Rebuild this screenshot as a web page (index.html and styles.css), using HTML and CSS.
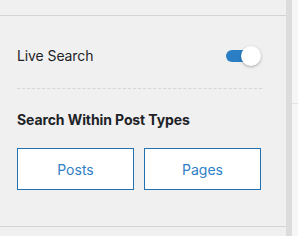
FILE: index.html
```html
<!DOCTYPE html>
<html>
<head>
<meta charset="utf-8">
<link rel="stylesheet" href="styles.css">
</head>
<body>
<div class="wrap">
  <div class="panel">
    <div class="section">
      <div class="row">
        <span class="label">Live Search</span>
        <span class="toggle"><span class="knob"></span></span>
      </div>
      <h3 class="heading">Search Within Post Types</h3>
      <div class="buttons">
        <button class="btn">Posts</button>
        <button class="btn">Pages</button>
      </div>
    </div>
  </div>
  <div class="strip"></div>
  <div class="rest"><div class="rest-line"></div></div>
</div>
</body>
</html>
```

FILE: styles.css
```css
html, body {
  margin: 0;
  padding: 0;
}
body {
  width: 298px;
  height: 236px;
  overflow: hidden;
  background: #f0f0f0;
  font-family: Inter, "Noto Sans", sans-serif;
  color: #1d2327;
}
.wrap {
  display: flex;
  height: 236px;
}
.panel {
  width: 286px;
  padding-top: 15px;
  background: #f0f0f0;
}
.section {
  border-top: 1px solid #d3d3d8;
  border-bottom: 1px solid #d3d3d8;
  padding: 0 24px 36px 17px;
}
.row {
  display: flex;
  align-items: center;
  justify-content: space-between;
  padding: 30px 0 22px;
  border-bottom: 1px dashed #d6d6d6;
  height: 20px;
}
.label {
  font-size: 14px;
  line-height: 20px;
  letter-spacing: -0.1px;
}
.toggle {
  position: relative;
  width: 35px;
  height: 20px;
  margin-right: 1px;
}
.toggle::before {
  content: "";
  position: absolute;
  left: 0;
  top: 4px;
  width: 28px;
  height: 12px;
  border-radius: 6px;
  background: #2a7fc4;
}
.knob {
  position: absolute;
  right: 0;
  top: 0;
  width: 20px;
  height: 20px;
  border-radius: 50%;
  background: #fff;
  box-shadow: 0 1px 3px rgba(0, 0, 0, 0.3);
}
.heading {
  margin: 21px 0 0;
  font-size: 14px;
  line-height: 20px;
  font-weight: 700;
  letter-spacing: -0.1px;
}
.buttons {
  display: flex;
  gap: 10px;
  margin-top: 18px;
}
.btn {
  width: 117px;
  height: 42px;
  margin: 0;
  padding: 0;
  background: #fff;
  border: 1px solid #2271b1;
  border-radius: 0;
  color: #2f80c6;
  font-family: Inter, "Noto Sans", sans-serif;
  font-size: 14px;
}
.strip {
  width: 6px;
  background: #dcdcdc;
}
.rest {
  flex: 1;
  background: #f6f6f6;
  padding-top: 103px;
}
.rest-line {
  height: 1px;
  background: #e4e4e4;
}
```
